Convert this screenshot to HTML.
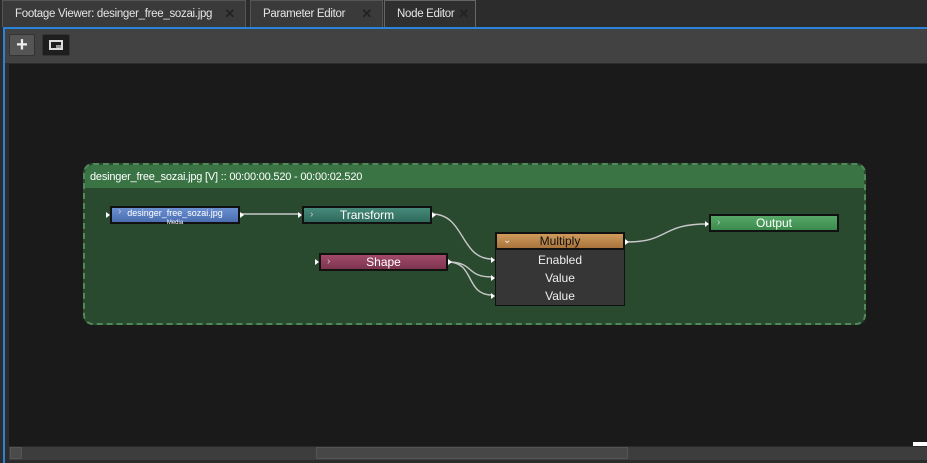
<!DOCTYPE html>
<html><head><meta charset="utf-8"><style>
*{margin:0;padding:0;box-sizing:border-box}
body{width:927px;height:463px;background:#2c2c2c;position:relative;overflow:hidden;font-family:"Liberation Sans","Noto Sans CJK JP",sans-serif;color:#fff}
.tab{position:absolute;top:0;height:27px;background:#3a3a3a;border:1px solid #555;border-bottom:none;font-size:11.5px;letter-spacing:-0.3px;line-height:26px;padding-left:12px;color:#e6e6e6;white-space:nowrap}
.x{position:absolute;top:0;right:10px;font-size:13px;color:#222;font-weight:bold}
.abs{position:absolute}
.node{position:absolute;height:18px;border:2px solid #111;font-size:12px;line-height:14px;text-align:center;color:#fff}
.node .ch{position:absolute;left:6px;top:0;font-size:10px;color:#ccc}
.port{position:absolute;width:0;height:0;border-top:3px solid transparent;border-bottom:3px solid transparent;border-left:4px solid #fff}
</style></head><body>
<div class="tab" style="left:2px;width:244px">Footage Viewer: desinger_free_sozai.jpg<span class="x">✕</span></div>
<div class="tab" style="left:250px;width:133px">Parameter Editor<span class="x">✕</span></div>
<div class="tab" style="left:384px;width:92px;background:#2f2f2f;border-color:#666">Node Editor<span class="x" style="right:6px">✕</span></div>
<div class="abs" style="left:3px;top:27px;width:924px;height:2px;background:#2b82d9"></div>
<div class="abs" style="left:3px;top:27px;width:2px;height:436px;background:#2b82d9"></div>
<div class="abs" style="left:5px;top:29px;width:922px;height:34px;background:#424242"></div>
<div class="abs" style="left:9px;top:34px;width:26px;height:22px;background:#555;border:1px solid #333;border-radius:2px;font-size:20px;line-height:20px;text-align:center;font-weight:bold;color:#eee">+</div>
<div class="abs" style="left:42px;top:34px;width:28px;height:22px;background:#1e1e1e;border:1px solid #333;border-radius:2px"><div class="abs" style="left:6px;top:5px;width:14px;height:10px;border:2px solid #ddd"></div><div class="abs" style="left:13px;top:10px;width:5px;height:3px;background:#999"></div></div>
<div class="abs" style="left:9px;top:64px;width:918px;height:382px;background:#1a1a1a"></div>
<div class="abs" style="left:9px;top:446px;width:918px;height:14px;background:#3d3d3d;border-top:1px solid #2a2a2a"></div>
<div class="abs" style="left:316px;top:447px;width:312px;height:12px;background:#474747;border:1px solid #555"></div>
<div class="abs" style="left:10px;top:447px;width:12px;height:12px;background:#4a4a4a;border:1px solid #555"></div>
<div class="abs" style="left:913px;top:442px;width:14px;height:4px;background:#fff"></div>
<div class="abs" style="left:83px;top:163px;width:783px;height:162px;background:#2a4a30;border:2px dashed #4f8a58;border-radius:10px;overflow:hidden">
<div style="height:23px;background:#3a7444;font-size:11px;letter-spacing:-0.2px;line-height:24px;padding-left:5px;color:#fff">desinger_free_sozai.jpg [V] :: 00:00:00.520 - 00:00:02.520</div></div>
<svg class="abs" style="left:0;top:0" width="927" height="463"><g fill="none" stroke="#c8c8c8" stroke-width="1.4">
<path d="M240 214 L300 214"/>
<path d="M432 214 C465 214,460 259,492 259"/>
<path d="M448 262 C475 262,465 277,492 277"/>
<path d="M448 262 C475 262,465 295,492 295"/>
<path d="M626 242 C670 242,660 224,707 224"/></g></svg>
<div class="node" style="left:110px;top:206px;width:130px;background:linear-gradient(#6a8fd0,#4a6eb0);font-size:9px;line-height:8px;padding-top:1px"><span class="ch">›</span>desinger_free_sozai.jpg<br><span style="font-size:6px">Media</span></div>
<div class="port" style="left:106px;top:212px"></div><div class="port" style="left:240px;top:212px"></div>
<div class="node" style="left:302px;top:206px;width:130px;background:linear-gradient(#468a7a,#2f6a5c)"><span class="ch">›</span>Transform</div>
<div class="port" style="left:298px;top:212px"></div><div class="port" style="left:432px;top:212px"></div>
<div class="node" style="left:319px;top:253px;width:129px;background:linear-gradient(#a04a68,#7d3550)"><span class="ch">›</span>Shape</div>
<div class="port" style="left:315px;top:259px"></div><div class="port" style="left:448px;top:259px"></div>
<div class="abs" style="left:495px;top:232px;width:130px;height:74px;background:#363636;border:1px solid #111"></div>
<div class="node" style="left:495px;top:232px;width:130px;background:linear-gradient(#d09a5c,#a8743c);color:#111"><span class="ch" style="color:#eee">⌄</span>Multiply</div>
<div class="abs" style="left:495px;top:251px;width:130px;font-size:12px;line-height:18px;text-align:center;color:#eee">Enabled<br>Value<br>Value</div>
<div class="port" style="left:491px;top:257px"></div><div class="port" style="left:491px;top:275px"></div><div class="port" style="left:491px;top:293px"></div><div class="port" style="left:625px;top:239px"></div>
<div class="node" style="left:709px;top:214px;width:130px;background:linear-gradient(#58a868,#3a8a4c)"><span class="ch">›</span>Output</div>
<div class="port" style="left:705px;top:221px"></div>
</body></html>
